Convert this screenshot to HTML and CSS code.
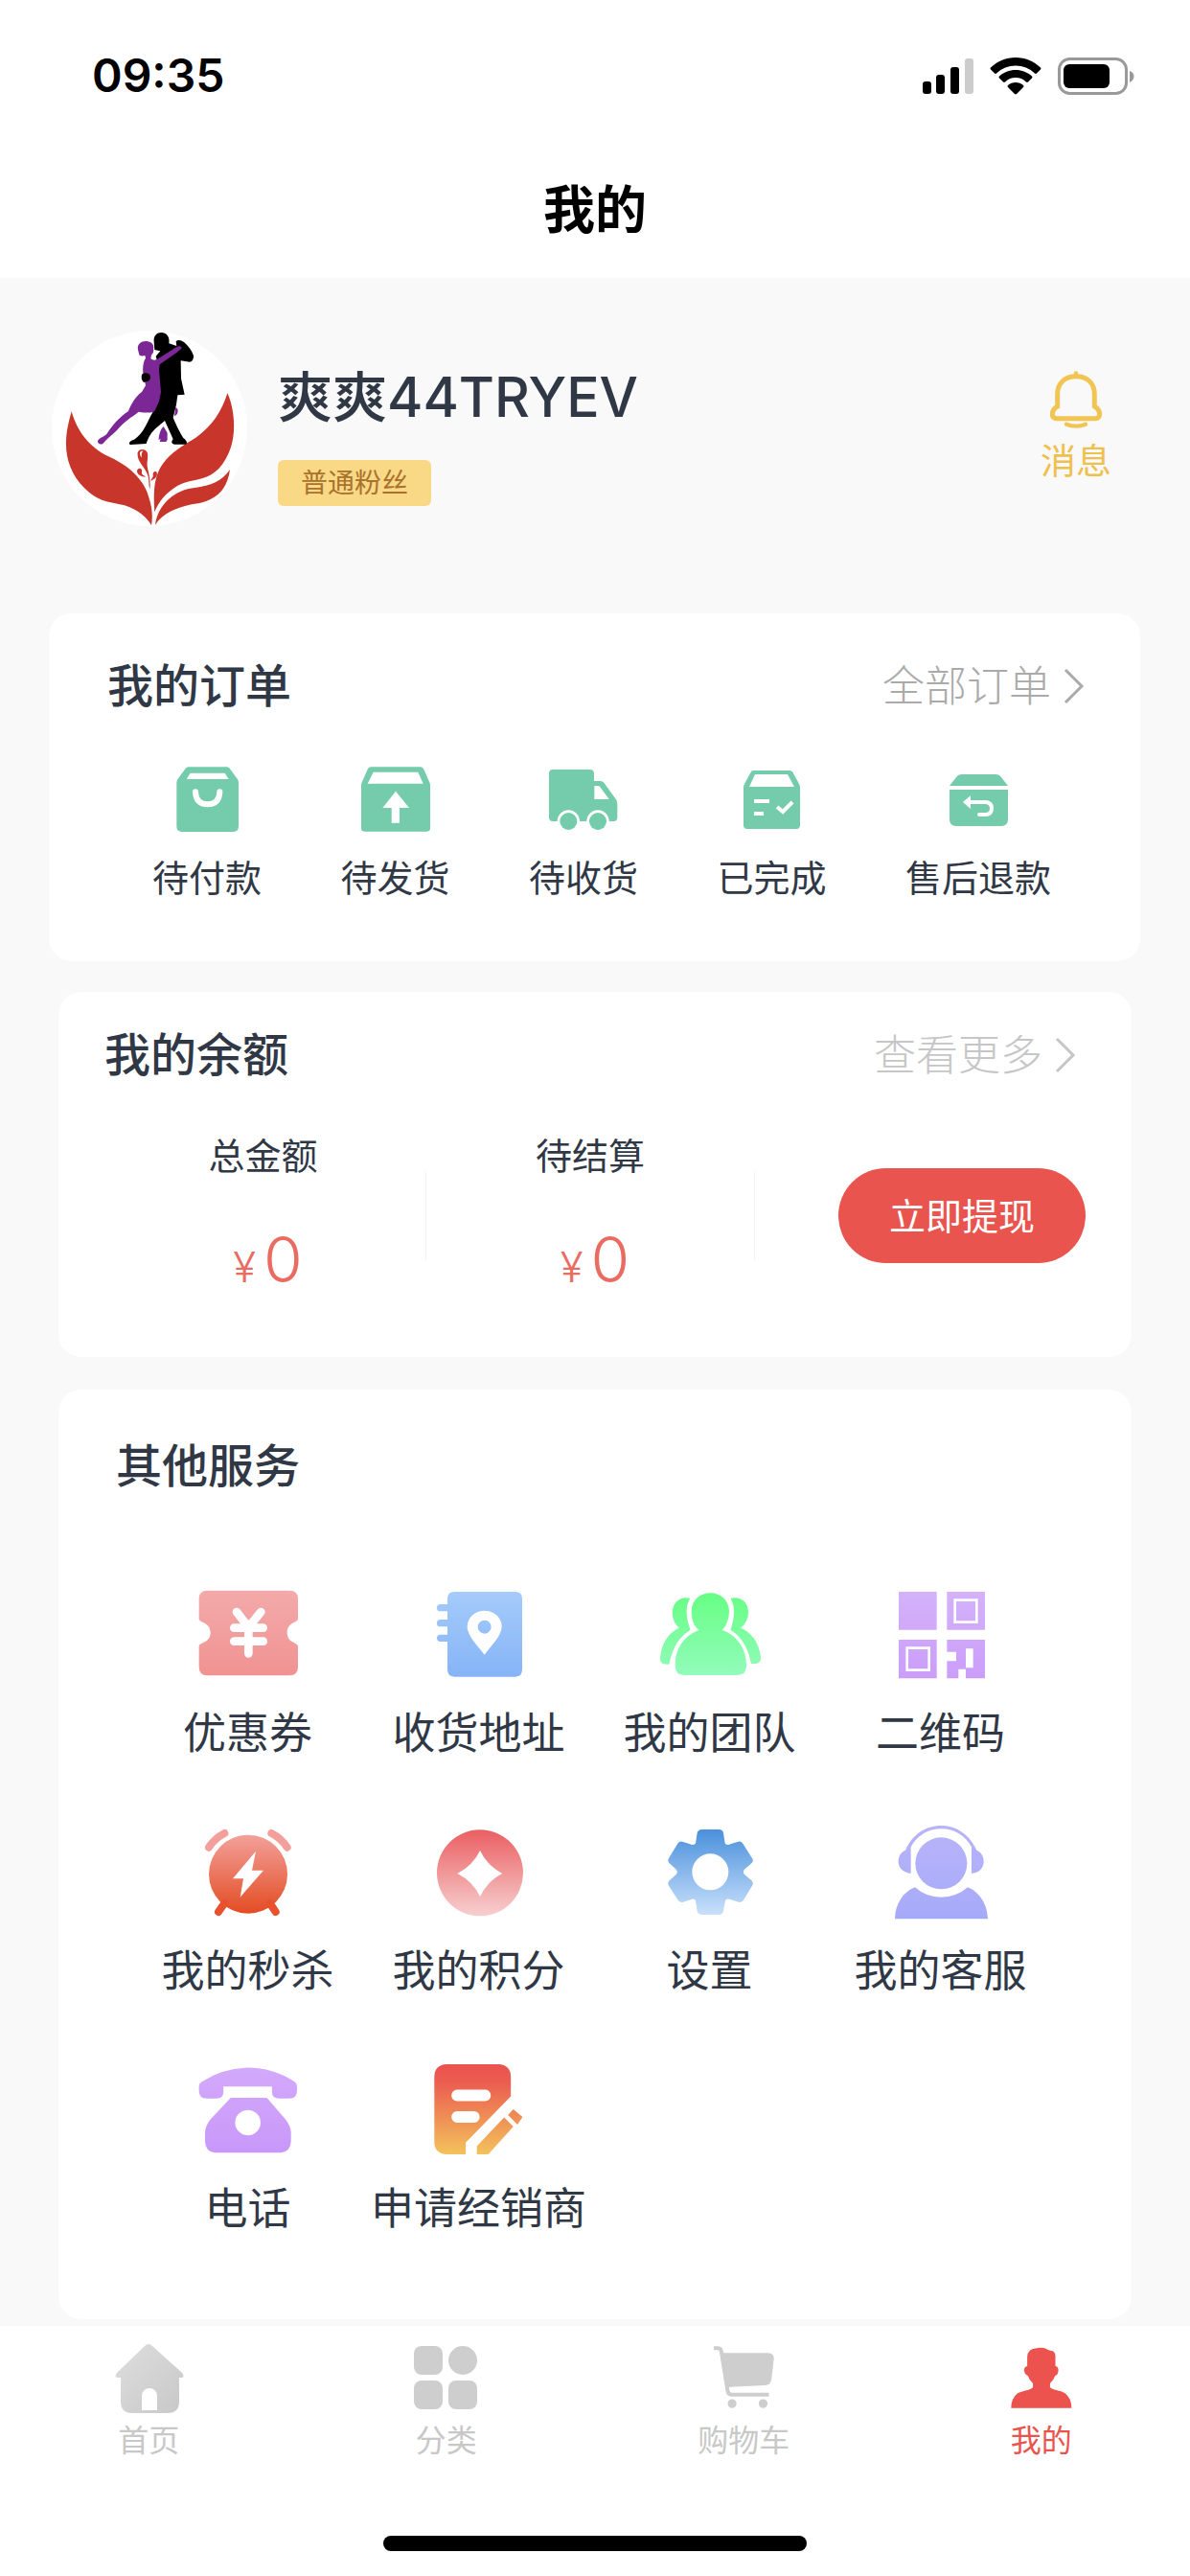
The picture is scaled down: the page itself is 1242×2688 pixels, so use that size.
FILE: index.html
```html
<!DOCTYPE html>
<html lang="zh-CN">
<head>
<meta charset="utf-8">
<meta name="viewport" content="width=device-width, initial-scale=1">
<title>我的</title>
<link rel="stylesheet" href="styles.css">
</head>
<body>
<div class="page">
  <header class="top">
    <div class="status">
      <time class="status-time">09:35</time>
      <svg class="status-icons" viewBox="963 56 222 44" aria-hidden="true">
        <rect x="963" y="84" width="9" height="13" rx="3"/>
        <rect x="977" y="77" width="9" height="20" rx="3"/>
        <rect x="992" y="69" width="9" height="28" rx="3"/>
        <rect x="1007" y="60" width="9" height="37" rx="3" fill="#ccc"/>
        <path d="M1060 59c10 0 19 4 26 10.500c.6.6.6 1.400 0 2l-4 4c-.6.6-1.400.6-2 0a29 29 0 0 0-40 0c-.6.6-1.400.6-2 0l-4-4c-.6-.6-.6-1.400 0-2c7-6.500 16-10.500 26-10.500z"/>
        <path d="M1060 72c6.500 0 12.500 2.500 17 6.500c.6.6.6 1.400 0 2l-4 4c-.6.6-1.400.6-2 0a16 16 0 0 0-22 0c-.6.6-1.400.6-2 0l-4-4c-.6-.6-.6-1.400 0-2c4.500-4 10.500-6.500 17-6.500z"/>
        <path d="M1060 85c3 0 6 1 8 3c.6.6.6 1.400 0 2l-7 7c-.6.6-1.400.6-2 0l-7-7c-.6-.6-.6-1.400 0-2c2-2 5-3 8-3z"/>
        <rect x="1105.500" y="60.500" width="70" height="36" rx="11" fill="none" stroke="#999" stroke-width="3"/>
        <rect x="1110" y="66" width="48" height="25" rx="6"/>
        <path d="M1179 73c6 2 6 9 0 12z" fill="#999"/>
      </svg>
    </div>
    <h1 class="nav-title">我的</h1>
  </header>

  <main class="content">
    <section class="profile">
      <svg class="avatar" viewBox="12 18 612 612" role="img" aria-label="头像">
        <circle cx="318" cy="324" r="306" fill="#fff"/>
        <g fill="#c7352b">
          <path d="M74 271C90 330 130 385 190 412C250 440 300 480 316 540C328 575 328 605 324 628C312 605 285 580 240 565C200 555 165 555 130 525C75 480 55 420 57 365C58 330 66 300 74 271z"/>
          <path d="M562 214C545 270 515 315 465 352C420 380 385 400 360 435C330 475 330 530 334 586C350 545 385 510 425 495C465 482 500 485 535 450C575 405 585 350 582 300C580 265 572 235 562 214z"/>
          <path d="M570 453C545 490 510 503 460 510C400 515 345 560 336 626C360 590 400 573 450 562C510 555 560 530 570 453z"/>
          <path d="M281 400C284 387 308 386 312 402C315 418 308 430 312 448C317 470 322 490 319 515C314 495 319 480 309 462C299 440 278 425 281 400z"/>
          <path d="M279 456C284 443 298 450 294 461C292 470 302 470 306 476C294 476 279 470 279 456zM342 464C338 454 327 460 329 470C331 478 324 480 322 488C332 484 342 478 342 464z"/>
        </g>
        <path d="M288 401c1-5 6-7 10-6c-5 4-6 12-4 20c-4-3-7-9-6-14z" fill="#fff"/>
        <path fill="#7c2796" d="M400 258c10 4 8 18 2 24l-6 4zM362 318l12 20v22l-4 6h-20l3-10l-6 4c0-16 6-34 15-42z"/>
        <path fill="#000" d="M332 52C330 32 344 22 358 24C374 26 382 40 379 58L403 66L401 52C406 45 420 47 427 55C440 66 450 80 456 96C457 106 452 116 444 116L416 112L417 168L428 218L406 220L402 250L392 290C400 310 415 340 424 354C436 362 438 374 430 374L396 374C384 372 388 362 392 358L366 300L342 320C325 334 315 350 308 372L258 375C250 370 258 362 270 359C300 340 310 306 328 274L344 240V120L338 98L352 82L334 78z"/>
        <path fill="#7c2796" d="M282 78C278 58 296 49 310 51C326 53 334 64 330 76C333 82 328 92 324 94L322 106C330 113 340 110 350 103L402 70C408 64 423 66 417 75L404 86L350 124L348 140L354 210L348 240L334 270C326 276 310 276 284 272C262 290 240 300 216 330C200 345 184 358 172 372C164 376 155 372 156 364C160 352 174 352 184 342C204 312 222 290 252 270C260 250 272 226 294 210L306 190L298 150C296 130 300 112 306 104L304 96C296 98 288 98 286 94z"/>
        <path fill="#000" d="M294 156c4-7 20-7 26 2c2 7 0 14-6 18l-14 4c-7-6-8-16-6-24z"/>
      </svg>
      <div class="identity">
        <h2 class="name">爽爽44TRYEV</h2>
        <span class="badge">普通粉丝</span>
      </div>
      <a class="messages" href="#messages">
        <svg class="bell" viewBox="97 78 180 192" fill="none" stroke="#f2c452" stroke-linecap="round" aria-hidden="true">
          <path d="M129 192V154C129 118 154 98 187 98C220 98 245 118 245 154V192C266 205 266 230 247 230H127C108 230 108 205 129 192z" stroke-width="15"/>
          <path d="M187 88v6M157 248q30 12 60 0" stroke-width="13"/>
        </svg>
        <span>消息</span>
      </a>
    </section>

    <section class="card orders">
      <div class="card-head">
        <h2 class="card-title">我的订单</h2>
        <a class="more" href="#orders">全部订单
          <svg class="chevron" viewBox="0 0 20 36" aria-hidden="true"><path d="M1 1L18 18L1 35"/></svg>
        </a>
      </div>
      <nav class="order-list">
        <a class="order" href="#unpaid">
          <svg class="order-icon" viewBox="18 27 240 240" aria-hidden="true">
            <path fill-rule="evenodd" d="M80 46H200Q206 46 210 52L234 85Q237 90 237 96V232Q237 249 220 249H60Q43 249 43 232V96Q43 90 46 85L70 52Q74 46 80 46zM86 65L74 84H206L194 65z"/>
            <path d="M102 124Q104 163 140 163Q176 163 178 124" class="cut" stroke-width="18"/>
          </svg>
          <span>待付款</span>
        </a>
        <a class="order" href="#unshipped">
          <svg class="order-icon" viewBox="606 27 240 240" aria-hidden="true">
            <path fill-rule="evenodd" d="M652 46H806Q813 46 817 53L834 92Q837 98 837 104V238Q837 248 827 248H631Q621 248 621 238V104Q621 98 624 92L641 53Q645 46 652 46zM659 62L641 98H815L799 62z"/>
            <path d="M729 122L771 174H741V221H716V174H688z" fill="#fff"/>
          </svg>
          <span>待发货</span>
        </a>
        <a class="order" href="#shipped">
          <svg class="order-icon" viewBox="1194 27 240 240" aria-hidden="true">
            <path fill-rule="evenodd" d="M1218 54H1334Q1347 54 1347 67V90H1368Q1374 90 1378 95L1416 148Q1420 154 1420 161V204Q1420 216 1408 216H1394A35 35 0 0 0 1324 216H1302A35 35 0 0 0 1232 216H1218Q1206 216 1206 204V66Q1206 54 1218 54zM1348 105V147H1394L1366 109Q1363 105 1358 105z"/>
            <circle cx="1267" cy="216" r="27"/><circle cx="1359" cy="216" r="27"/>
          </svg>
          <span>待收货</span>
        </a>
        <a class="order" href="#done">
          <svg class="order-icon" viewBox="764 794 80 80" aria-hidden="true">
            <path fill-rule="evenodd" d="M785 804H823Q826 804 827 807L833 818Q834 820 834 822V861Q834 865 830 865H779Q775 865 775 861V822Q775 820 776 818L782 807Q783 804 785 804zM787 808L781 821H828L821 808z"/>
            <path d="M786 836H802M786 849H796M810 842L816 847L826 837" class="cut cut-flat" stroke-width="4"/>
          </svg>
          <span>已完成</span>
        </a>
        <a class="order" href="#refund">
          <svg class="order-icon" viewBox="979 794 80 80" aria-hidden="true">
            <path d="M1002 808H1037Q1041 808 1043 811L1050 820H989L996 811Q998 808 1002 808zM989 824H1050V855Q1050 862 1043 862H996Q989 862 989 855z"/>
            <path d="M1010 837H1026Q1033 837 1033 843.500T1026 850H1020" class="cut" stroke-width="4"/>
            <path d="M1003 837L1011 830V844z" fill="#fff"/>
          </svg>
          <span>售后退款</span>
        </a>
      </nav>
    </section>

    <section class="card balance">
      <div class="card-head">
        <h2 class="card-title">我的余额</h2>
        <a class="more more-light" href="#balance">查看更多
          <svg class="chevron" viewBox="0 0 20 36" aria-hidden="true"><path d="M1 1L18 18L1 35"/></svg>
        </a>
      </div>
      <div class="balance-body">
        <div class="figure">
          <span class="figure-label">总金额</span>
          <span class="amount"><span class="yen">¥</span>0</span>
        </div>
        <span class="divider"></span>
        <div class="figure">
          <span class="figure-label">待结算</span>
          <span class="amount"><span class="yen">¥</span>0</span>
        </div>
        <span class="divider"></span>
        <button class="withdraw" type="button">立即提现</button>
      </div>
    </section>

    <section class="card services">
      <h2 class="card-title">其他服务</h2>
      <nav class="service-grid">
        <a class="service" href="#coupons">
          <svg class="service-icon" viewBox="200 96 312 312" aria-hidden="true">
            <defs><linearGradient id="g-coupon" x2="0" y2="1"><stop stop-color="#f3aaaa"/><stop offset="1" stop-color="#f19292"/></linearGradient></defs>
            <path fill="url(#g-coupon)" d="M228 119H486Q512 119 512 145V208C512 220 478 218 478 251C478 284 512 280 512 294V358Q512 385 486 385H228Q202 385 202 358V294C202 280 238 284 238 251C238 218 202 220 202 208V145Q202 119 228 119z"/>
            <path d="M320 186L357 234L396 186M357 234V316M312 236H403M312 278H403" class="cut" stroke-width="26"/>
          </svg>
          <span>优惠券</span>
        </a>
        <a class="service" href="#addresses">
          <svg class="service-icon" viewBox="921 96 312 312" aria-hidden="true">
            <defs><linearGradient id="g-book" x2="0" y2="1"><stop stop-color="#a4cbfa"/><stop offset="1" stop-color="#86b4f6"/></linearGradient></defs>
            <path fill="url(#g-book)" d="M1000 123H1190Q1212 123 1212 145V367Q1212 389 1190 389H1000Q978 389 978 367V279H956A11 11 0 0 1 956 257H978V232H956A11 11 0 0 1 956 210H978V184H956A11 11 0 0 1 956 162H978V145Q978 123 1000 123z"/>
            <path fill="#fff" fill-rule="evenodd" d="M1094 320C1078 298 1040 262 1040 232A54 50 0 0 1 1148 232C1148 262 1110 298 1094 320zM1094 212a21 21 0 1 0 0 42a21 21 0 1 0 0-42z"/>
          </svg>
          <span>收货地址</span>
        </a>
        <a class="service" href="#team">
          <svg class="service-icon" viewBox="204 96 312 312" aria-hidden="true">
            <defs><linearGradient id="g-team" gradientUnits="userSpaceOnUse" x1="0" y1="128" x2="0" y2="384"><stop stop-color="#67ff84"/><stop offset="1" stop-color="#92fbbb"/></linearGradient></defs>
            <g fill="url(#g-team)">
              <path d="M302 184C302 150 328 127 361 127C394 127 420 150 420 184C420 212 408 234 398 243C440 258 474 295 474 355Q474 384 445 384H280Q251 384 251 355C251 295 284 258 326 243C310 232 302 212 302 184z"/>
              <path d="M298 143C284 164 282 200 299 242C262 264 242 300 232 350C214 350 203 348 204 330C208 282 232 250 264 236C232 212 234 148 280 142zM424 143C438 164 440 200 424 242C460 264 480 300 489 348C507 350 520 346 519 328C514 282 490 250 456 236C490 212 490 148 442 142z"/>
            </g>
          </svg>
          <span>我的团队</span>
        </a>
        <a class="service" href="#qrcode">
          <svg class="service-icon" viewBox="927 96 312 312" aria-hidden="true">
            <defs><linearGradient id="g-qr" gradientUnits="userSpaceOnUse" x1="0" y1="123" x2="0" y2="394"><stop stop-color="#d4b2fa"/><stop offset="1" stop-color="#cb9dfa"/></linearGradient></defs>
            <path fill="url(#g-qr)" d="M951 123h119v119h-119zM1102 123h119v119h-119zM951 273h119v121h-119zM1102 273H1221V394H1161V365H1138V394H1102V340H1131V311H1102zM1161 301V361H1184V301z" fill-rule="evenodd"/>
            <path d="M1127 149H1195V218H1127zM977 299H1046V368H977z" class="cut cut-flat" stroke-width="8"/>
          </svg>
          <span>二维码</span>
        </a>
        <a class="service" href="#flash-sale">
          <svg class="service-icon" viewBox="200 840 312 312" aria-hidden="true">
            <defs><linearGradient id="g-clock" gradientUnits="userSpaceOnUse" x1="0" y1="868" x2="0" y2="1137"><stop stop-color="#f3a6a2"/><stop offset="1" stop-color="#e34a20"/></linearGradient></defs>
            <circle cx="356" cy="1007" r="123" fill="url(#g-clock)"/>
            <path d="M282 879Q251 895 233 923M429 879Q460 895 478 923" fill="none" stroke="#f3a09c" stroke-width="24" stroke-linecap="round"/>
            <path d="M282 1098L263 1125M424 1098L442 1125" fill="none" stroke="#e8502e" stroke-width="24" stroke-linecap="round"/>
            <path d="M380 935L308 1021H341L331 1079L404 995H368z" fill="#fff"/>
          </svg>
          <span>我的秒杀</span>
        </a>
        <a class="service" href="#points">
          <svg class="service-icon" viewBox="921 840 312 312" aria-hidden="true">
            <defs><linearGradient id="g-points" x2="0" y2="1"><stop stop-color="#ea5f62"/><stop offset="1" stop-color="#f7cfcf"/></linearGradient></defs>
            <circle cx="1080" cy="1003" r="135" fill="url(#g-points)"/>
            <path d="M1080 933Q1102 980 1150 1005Q1102 1030 1080 1077Q1058 1030 1009 1005Q1058 980 1080 933z" fill="#fff"/>
          </svg>
          <span>我的积分</span>
        </a>
        <a class="service" href="#settings">
          <svg class="service-icon" viewBox="204 840 312 312" aria-hidden="true">
            <defs><linearGradient id="g-gear" x2="0" y2="1"><stop stop-color="#4a90dc"/><stop offset="1" stop-color="#c9e0fb"/></linearGradient></defs>
            <path fill="url(#g-gear)" fill-rule="evenodd" d="M335 867H388Q400 867 402 878L407 910Q411 918 420 914L446 906Q457 902 463 911L492 957Q498 966 490 973L468 992Q461 1000 468 1008L490 1027Q498 1034 492 1043L466 1087Q460 1098 449 1094L420 1085Q411 1082 408 1090L402 1122Q400 1134 388 1134H335Q323 1134 320 1122L315 1090Q311 1082 302 1086L276 1094Q265 1098 259 1087L231 1043Q226 1034 233 1027L254 1008Q261 1000 254 992L233 973Q226 966 231 957L259 911Q265 902 276 906L302 914Q311 918 315 910L320 878Q323 867 335 867zM361 943a57 57 0 1 0 0 114a57 57 0 1 0 0-114z"/>
          </svg>
          <span>设置</span>
        </a>
        <a class="service" href="#support">
          <svg class="service-icon" viewBox="927 840 312 312" aria-hidden="true">
            <defs><linearGradient id="g-support" gradientUnits="userSpaceOnUse" x1="0" y1="857" x2="0" y2="1147"><stop stop-color="#b9b4fa"/><stop offset="1" stop-color="#a5aaf8"/></linearGradient></defs>
            <g fill="url(#g-support)">
              <circle cx="1084" cy="973" r="81"/>
              <path d="M939 1147C940 1100 965 1062 1002 1048Q1036 1079 1084 1079Q1132 1079 1167 1048C1204 1062 1228 1100 1230 1147z"/>
              <path d="M989 1005C962 1000 950 985 950 968C950 950 958 938 972 932C994 882 1036 855 1084 855C1132 855 1172 882 1195 932C1209 938 1217 950 1217 968C1217 985 1205 1002 1179 1005V922C1160 886 1124 865 1084 865C1044 865 1008 886 989 922z"/>
            </g>
          </svg>
          <span>我的客服</span>
        </a>
        <a class="service" href="#phone">
          <svg class="service-icon" viewBox="200 144 314 314" aria-hidden="true">
            <defs><linearGradient id="g-phone" gradientUnits="userSpaceOnUse" x1="0" y1="174" x2="0" y2="441"><stop stop-color="#d3a9fb"/><stop offset="1" stop-color="#c898f9"/></linearGradient></defs>
            <path fill="url(#g-phone)" fill-rule="evenodd" d="M211 217Q280 173 357 173Q434 173 503 217Q511 222 511 231V246Q511 270 487 270H455Q432 270 432 248V232H279V248Q279 270 257 270H226Q202 270 202 246V231Q202 222 211 217zM302 268H416L474 335Q492 357 492 378V406Q490 438 460 441H252Q223 438 221 406V378Q221 357 239 335zM356 306a40 40 0 1 0 0 80a40 40 0 1 0 0-80z"/>
          </svg>
          <span>电话</span>
        </a>
        <a class="service" href="#dealer">
          <svg class="service-icon" viewBox="925 144 314 314" aria-hidden="true">
            <defs><linearGradient id="g-dealer" gradientUnits="userSpaceOnUse" x1="0" y1="162" x2="0" y2="446"><stop stop-color="#ea524e"/><stop offset=".2" stop-color="#eb5d50"/><stop offset="1" stop-color="#f3c25c"/></linearGradient></defs>
            <path fill="url(#g-dealer)" fill-rule="evenodd" d="M980 162H1143Q1182 164 1182 202V263L1040 409V446H980Q941 444 941 406V202Q941 164 980 162zM1013 242a18 18 0 0 0 0 36H1101a18 18 0 0 0 0-36zM1013 310a18 18 0 0 0 0 36H1066a18 18 0 0 0 0-36z"/>
            <path fill="url(#g-dealer)" d="M1161 330L1190 358L1111 446H1075V420zM1173 322L1190 304L1219 328L1203 352z"/>
          </svg>
          <span>申请经销商</span>
        </a>
      </nav>
    </section>
  </main>

  <footer class="bottom">
    <nav class="tabs">
      <a class="tab" href="#home">
        <svg class="tab-icon" viewBox="117 2444 76 76" aria-hidden="true">
          <defs><linearGradient id="g-home" x2="1" y2="1"><stop stop-color="#dedede"/><stop offset="1" stop-color="#c8c8c8"/></linearGradient></defs>
          <path fill="url(#g-home)" d="M151 2448Q155 2444 159 2448L190 2476Q193 2480 190 2481H187V2506Q187 2518 175 2518H138Q126 2518 126 2506V2481H122Q119 2480 122 2476zM148 2515H164V2500A8 8 0 0 0 148 2500z" fill-rule="evenodd"/>
        </svg>
        <span>首页</span>
      </a>
      <a class="tab" href="#categories">
        <svg class="tab-icon" viewBox="428 2444 76 76" aria-hidden="true">
          <rect x="432" y="2448" width="30" height="30" rx="8"/><circle cx="483" cy="2463" r="15"/>
          <rect x="432" y="2484" width="30" height="30" rx="8"/><rect x="468" y="2484" width="30" height="30" rx="8"/>
        </svg>
        <span>分类</span>
      </a>
      <a class="tab" href="#cart">
        <svg class="tab-icon" viewBox="83 42 230 230" aria-hidden="true">
          <path d="M104 61H118Q127 62 128 72L148 196Q150 208 162 208H278" fill="none" stroke="#cecece" stroke-width="12"/>
          <path d="M130 76H276Q294 78 294 94L286 160Q284 176 268 178L150 184z"/>
          <circle cx="162" cy="236" r="14"/><circle cx="260" cy="236" r="14"/>
        </svg>
        <span>购物车</span>
      </a>
      <a class="tab tab-active" href="#me" aria-current="page">
        <svg class="tab-icon" viewBox="1016 42 230 230" aria-hidden="true">
          <path d="M1086 88Q1088 64 1112 62Q1136 56 1152 66L1160 69Q1174 68 1175 86V118Q1186 120 1184 134Q1182 146 1174 148Q1170 162 1158 172V184C1164 194 1190 192 1206 204Q1226 220 1226 250H1035Q1035 220 1055 204C1070 194 1098 194 1104 184V172Q1092 162 1088 148Q1078 144 1076 132Q1076 120 1086 118z"/>
        </svg>
        <span>我的</span>
      </a>
    </nav>
    <div class="home-indicator"></div>
  </footer>
</div>
</body>
</html>
```
FILE: styles.css
```css
* {
  box-sizing: border-box;
}

body {
  margin: 0;
  background: #fff;
  color: #303846;
  font-family: Inter, "Noto Sans CJK SC", sans-serif;
}

h1,
h2 {
  margin: 0;
}

a {
  color: inherit;
  text-decoration: none;
}

svg {
  display: block;
  flex: none;
  overflow: visible;
}

.page {
  display: flex;
  flex-direction: column;
  min-height: 100vh;
}

/* Header */

.top {
  padding-bottom: 8px;
  background: #fff;
  color: #000;
}

.status {
  display: flex;
  align-items: center;
  justify-content: space-between;
  height: 158px;
  padding: 0 57px 0 96px;
}

.status-time {
  font-size: 48px;
  font-weight: 600;
  line-height: 60px;
}

.status-icons {
  width: 222px;
  height: 44px;
}

.nav-title {
  font-size: 54px;
  font-weight: 600;
  line-height: 124px;
  text-align: center;
}

/* Profile */

.content {
  flex: 1;
  padding-bottom: 7px;
  background: #f9f9f9;
}

.profile {
  display: flex;
  align-items: flex-start;
  padding: 55px 82px 91px 54px;
}

.avatar {
  width: 204px;
  height: 204px;
}

.identity {
  display: flex;
  flex: 1;
  flex-direction: column;
  align-items: flex-start;
  gap: 30px;
  padding: 35px 0 0 32px;
}

.name {
  font-size: 57px;
  font-weight: 500;
  line-height: 70px;
}

.badge {
  padding: 0 24px;
  border-radius: 6px;
  background: #f9d985;
  color: #a9722e;
  font-size: 28px;
  line-height: 48px;
}

.messages {
  display: flex;
  flex-direction: column;
  align-items: center;
  gap: 10px;
  padding-top: 41px;
  color: #f0c04e;
  font-size: 37px;
  line-height: 44px;
}

.bell {
  width: 60px;
  height: 64px;
}

/* Cards */

.card {
  border-radius: 24px;
  background: #fff;
}

.card-head {
  display: flex;
  align-items: center;
  justify-content: space-between;
}

.card-title {
  font-size: 48px;
  font-weight: 500;
  line-height: 60px;
}

.more {
  display: flex;
  align-items: center;
  gap: 14px;
  color: #aaa;
  font-size: 44px;
  font-weight: 300;
  line-height: 60px;
}

.more-light {
  color: #c6c6c6;
}

.chevron {
  width: 20px;
  height: 36px;
  fill: none;
  stroke: currentColor;
  stroke-width: 3;
}

.cut {
  fill: none;
  stroke: #fff;
  stroke-linecap: round;
}

.cut-flat {
  stroke-linecap: butt;
}

/* Orders */

.orders {
  margin: 0 52px 32px 51px;
  padding: 46px 59px 61px 61px;
}

.order-list {
  display: flex;
  justify-content: space-between;
  padding: 48px 34px 0 47px;
}

.order {
  display: flex;
  flex-direction: column;
  align-items: center;
  gap: 16px;
  font-size: 38px;
  line-height: 52px;
}

.order-icon {
  width: 80px;
  height: 80px;
  fill: #74ccac;
}

/* Balance */

.balance {
  margin: 0 61px 34px;
  padding: 36px 0 59px;
}

.balance .card-head {
  padding: 0 59px 0 48px;
}

.balance-body {
  display: grid;
  grid-template-columns: 339fr 1px 342fr 1px 393fr;
  align-items: center;
  padding: 49px 0 0 44px;
}

.figure {
  display: flex;
  flex-direction: column;
  align-items: center;
  gap: 42px;
  padding-bottom: 3px;
}

.figure-label {
  font-size: 38px;
  line-height: 52px;
}

.amount {
  display: flex;
  align-items: baseline;
  gap: 8px;
  padding-left: 10px;
  color: #ea6b62;
  font-size: 66px;
  font-weight: 300;
  line-height: 80px;
}

.yen {
  font-size: 44px;
  line-height: 44px;
}

.divider {
  height: 92px;
  background: #f3f3f3;
}

.withdraw {
  justify-self: end;
  height: 99px;
  margin-right: 48px;
  padding: 0 53px 4px;
  border: 0;
  border-radius: 50px;
  background: #e9544f;
  color: #fff;
  font: inherit;
  font-size: 38px;
}

/* Services */

.services {
  margin: 0 61px;
  padding: 50px 79px 85px 77px;
}

.services .card-title {
  margin-left: -17px;
}

.service-grid {
  display: grid;
  grid-template-columns: repeat(4, 1fr);
  row-gap: 61px;
  padding-top: 92px;
}

.service {
  display: flex;
  flex-direction: column;
  align-items: center;
  gap: 23px;
  font-size: 45px;
  line-height: 60px;
  white-space: nowrap;
}

.service-icon {
  width: 104px;
  height: 104px;
}

/* Tab bar */

.bottom {
  padding: 17px 0 26px;
  background: #fff;
}

.tabs {
  display: grid;
  grid-template-columns: repeat(4, 1fr);
}

.tab {
  display: flex;
  flex-direction: column;
  align-items: center;
  gap: 7px;
  color: #c8c8c8;
  font-size: 32px;
  line-height: 40px;
}

.tab-icon {
  width: 76px;
  height: 76px;
  fill: #cecece;
}

.tab-active {
  color: #e9544f;
}

.tab-active .tab-icon {
  fill: #ec534e;
}

.home-indicator {
  width: 442px;
  max-width: 60%;
  height: 16px;
  margin: 79px auto 0;
  border-radius: 8px;
  background: #000;
}
```
